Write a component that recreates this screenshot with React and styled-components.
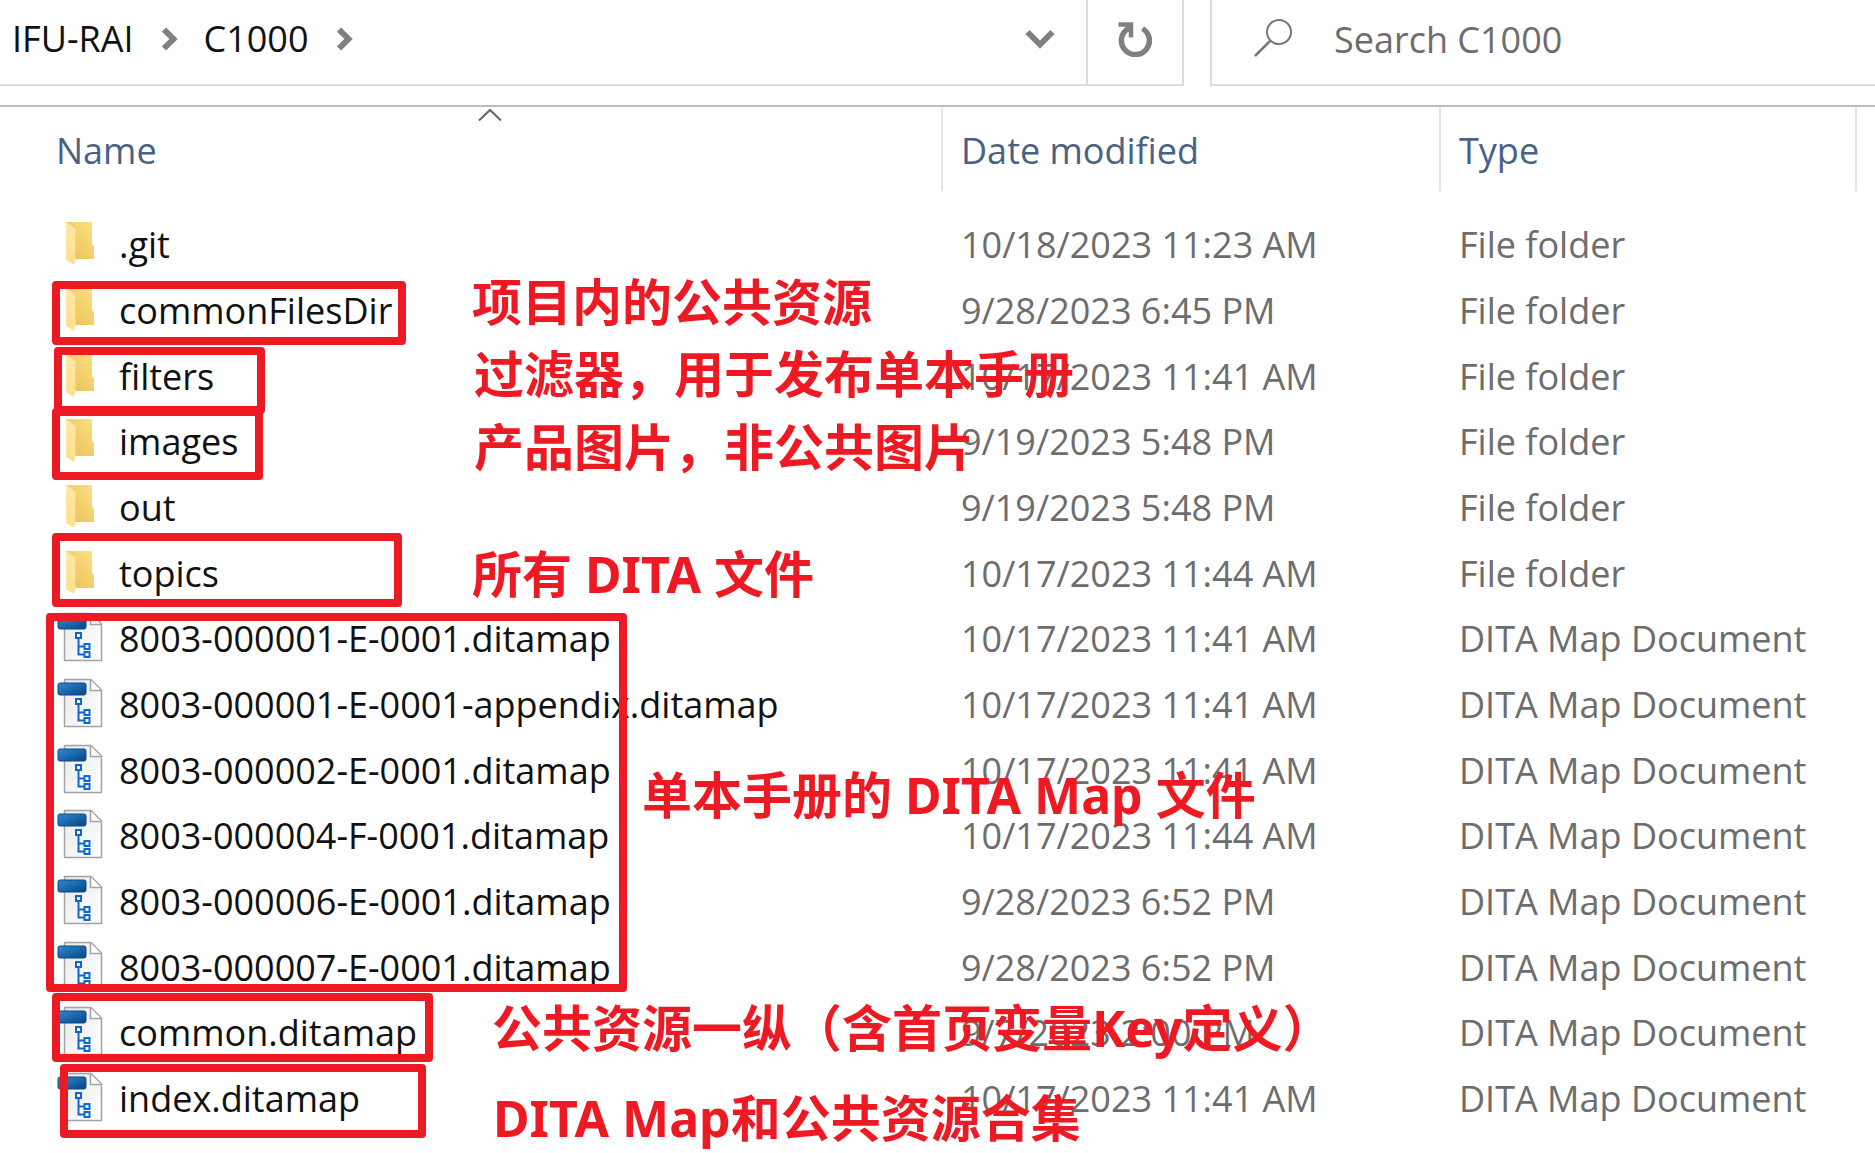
import React from "react";
import styled, { createGlobalStyle } from "styled-components";

const GlobalStyle = createGlobalStyle`
  *, *::before, *::after { box-sizing: border-box; }
  body { margin: 0; background: #fff; }
`;

const uiFont = `"Open Sans", "Noto Sans", sans-serif`;
const noteFont = `"Noto Sans", "Noto Sans CJK SC", sans-serif`;

const Explorer = styled.main`
  position: relative;
  min-height: 100vh;
  overflow: hidden;
  background: #fff;
  color: #111;
  font: 400 36px/48px ${uiFont};
`;

const Toolbar = styled.header`
  display: flex;
  gap: 26px;
  height: 107px;
  padding-bottom: 19px;
  border-bottom: 2px solid #bdbdbd;
`;

const AddressBar = styled.nav`
  flex: 1 1 auto;
  display: flex;
  border: solid #dcdcdc;
  border-width: 0 2px 2px 0;
`;

const Crumbs = styled.ol`
  flex: 1;
  display: flex;
  align-items: center;
  gap: 26px;
  margin: 0;
  padding: 0 0 6px 12px;
  list-style: none;
`;

const Crumb = styled.li`
  display: flex;
  align-items: center;
  gap: 28px;
`;

const CrumbLink = styled.a`
  color: #111;
  text-decoration: none;
`;

const IconButton = styled.button`
  display: flex;
  align-items: center;
  justify-content: center;
  width: ${(p) => p.$width}px;
  padding: 0 0 6px;
  border: 0;
  border-left: ${(p) => (p.$divided ? "2px solid #dcdcdc" : "0")};
  background: none;
`;

const SearchBox = styled.label`
  flex: 0 0 665px;
  display: flex;
  align-items: center;
  gap: 40px;
  padding: 0 0 4px 42px;
  border: solid #dcdcdc;
  border-width: 0 0 2px 2px;
`;

const SearchInput = styled.input`
  flex: 1;
  min-width: 0;
  padding: 0;
  border: 0;
  outline: 0;
  background: none;
  font: inherit;
  &::placeholder { color: #6d6d6d; opacity: 1; }
`;

const FileTable = styled.table`
  width: 100%;
  table-layout: fixed;
  border-collapse: separate;
  border-spacing: 0;
`;

const Column = styled.col`
  width: ${(p) => (p.$width ? `${p.$width}px` : "auto")};
`;

const HeadCell = styled.th`
  position: relative;
  height: 84px;
  padding: 4px 0 0 ${(p) => p.$indent}px;
  border-right: ${(p) => (p.$last ? "0" : "2px solid #e6e6e6")};
  color: #4a6184;
  font-weight: 400;
  text-align: left;
`;

const SortMark = styled.svg`
  position: absolute;
  top: 1px;
  left: calc(50% + 6px);
`;

const HeadGap = styled.tr`
  height: 21px;
`;

const Row = styled.tr`
  height: 66px;
  &:nth-child(3n) { height: 65px; }
`;

const Cell = styled.td`
  padding: 0 0 0 18px;
  color: #6d6d6d;
  white-space: nowrap;
`;

const NameCell = styled(Cell)`
  padding-left: 56px;
  color: #111;
`;

const FileName = styled.span`
  display: flex;
  align-items: center;
  gap: 15px;
`;

const Frame = styled.div`
  position: absolute;
  left: ${(p) => p.$x}px;
  top: ${(p) => p.$y}px;
  width: ${(p) => p.$w}px;
  height: ${(p) => p.$h}px;
  border: 8px solid #ee1a23;
  border-radius: 4px;
  pointer-events: none;
`;

const Note = styled.p`
  position: absolute;
  left: ${(p) => p.$x}px;
  top: ${(p) => p.$y}px;
  margin: 0;
  color: #ee1a23;
  font: 700 50px/60px ${noteFont};
  white-space: nowrap;
  pointer-events: none;
`;

const Chevron = () => (
  <svg width="16" height="24" viewBox="0 0 16 24" aria-hidden="true">
    <path d="M2 2.500L11.500 12L2 21.500" fill="none" stroke="#808080" strokeWidth="6" />
  </svg>
);

const DownChevron = () => (
  <svg width="30" height="20" viewBox="0 0 30 20" aria-hidden="true">
    <path d="M2.500 3L15 15.500L27.500 3" fill="none" stroke="#808080" strokeWidth="6" />
  </svg>
);

const Refresh = () => (
  <svg width="34" height="36" viewBox="0 0 34 36" aria-hidden="true">
    <path d="M24.500 7.500A14 14 0 1 1 9.500 8" fill="none" stroke="#808080" strokeWidth="5.500" />
    <path d="M0.500 3.500H13V16.500" fill="none" stroke="#808080" strokeWidth="4.500" />
    <path d="M6 4H13V14Z" fill="#808080" />
  </svg>
);

const Magnifier = () => (
  <svg width="40" height="42" viewBox="0 0 40 42" aria-hidden="true">
    <circle cx="25" cy="13" r="12" fill="none" stroke="#777" strokeWidth="2" />
    <path d="M16.500 21.500L1 37" stroke="#777" strokeWidth="2.500" />
  </svg>
);

const FolderIcon = () => (
  <svg width="48" height="50" viewBox="0 0 48 50" aria-hidden="true">
    <path d="M10 2H36V24L38 26V39H17L10 5Z" fill="url(#folderBack)" />
    <path d="M10 2L19.500 9V39L18 45L10 40Z" fill="url(#folderFlap)" />
  </svg>
);

const MapIcon = () => (
  <svg width="48" height="56" viewBox="0 -1 48 56" aria-hidden="true">
    <path d="M8.500 1.500H35L45.500 12V48.500H8.500Z" fill="url(#paper)" stroke="#a3a3a3" strokeWidth="1.500" strokeLinejoin="round" />
    <path d="M34.500 2V12.500H45" fill="#fff" stroke="#a3a3a3" strokeWidth="1.500" />
    <rect x="2" y="5" width="28" height="12" rx="2" fill="url(#tab)" stroke="#0a4a86" strokeWidth="1" />
    <g fill="none" stroke="#0b68d0" strokeWidth="2">
      <path d="M22.500 26V42.500H28M22.500 34.500H28" />
      <rect x="20" y="21" width="5" height="5" />
      <rect x="28.500" y="32" width="5" height="5" />
      <rect x="28.500" y="40" width="5" height="5" />
    </g>
  </svg>
);

const Gradients = () => (
  <svg width="0" height="0" style={{ display: "block" }} aria-hidden="true">
    <defs>
      <linearGradient id="folderBack" x1="0" y1="1" x2="1" y2="0">
        <stop offset="0" stopColor="#e6be55" />
        <stop offset="1" stopColor="#ffe083" />
      </linearGradient>
      <linearGradient id="folderFlap" x1="0" y1="0" x2="0" y2="1">
        <stop offset="0" stopColor="#ffe9a9" />
        <stop offset="1" stopColor="#fee08c" />
      </linearGradient>
      <linearGradient id="paper" x1="0" y1="0" x2="1" y2="1">
        <stop offset="0" stopColor="#e9e9e9" />
        <stop offset="1" stopColor="#fff" />
      </linearGradient>
      <linearGradient id="tab" x1="0" y1="0" x2="1" y2="1">
        <stop offset="0" stopColor="#2f8ad6" />
        <stop offset="1" stopColor="#07457f" />
      </linearGradient>
    </defs>
  </svg>
);

const FOLDER = "File folder";
const MAP = "DITA Map Document";

const files = [
  [".git", "10/18/2023 11:23 AM", FOLDER],
  ["commonFilesDir", "9/28/2023 6:45 PM", FOLDER],
  ["filters", "10/17/2023 11:41 AM", FOLDER],
  ["images", "9/19/2023 5:48 PM", FOLDER],
  ["out", "9/19/2023 5:48 PM", FOLDER],
  ["topics", "10/17/2023 11:44 AM", FOLDER],
  ["8003-000001-E-0001.ditamap", "10/17/2023 11:41 AM", MAP],
  ["8003-000001-E-0001-appendix.ditamap", "10/17/2023 11:41 AM", MAP],
  ["8003-000002-E-0001.ditamap", "10/17/2023 11:41 AM", MAP],
  ["8003-000004-F-0001.ditamap", "10/17/2023 11:44 AM", MAP],
  ["8003-000006-E-0001.ditamap", "9/28/2023 6:52 PM", MAP],
  ["8003-000007-E-0001.ditamap", "9/28/2023 6:52 PM", MAP],
  ["common.ditamap", "9/7/2023 2:00 PM", MAP],
  ["index.ditamap", "10/17/2023 11:41 AM", MAP],
];

const frames = [
  [52, 281, 354, 64],
  [54, 347, 211, 67],
  [52, 408, 211, 72],
  [52, 533, 350, 74],
  [46, 613, 581, 379],
  [52, 993, 381, 69],
  [60, 1064, 366, 74],
];

const notes = [
  [472, 272, "项目内的公共资源"],
  [474, 344, "过滤器，用于发布单本手册"],
  [474, 417, "产品图片，非公共图片"],
  [472, 544, "所有 DITA 文件"],
  [642, 765, "单本手册的 DITA Map 文件"],
  [492, 998, "公共资源一纵（含首页变量Key定义）"],
  [493, 1088, "DITA Map和公共资源合集"],
];

export default function App() {
  return (
    <Explorer>
      <GlobalStyle />
      <Gradients />
      <Toolbar>
        <AddressBar aria-label="Address">
          <Crumbs>
            <Crumb><CrumbLink href="#ifu-rai">IFU-RAI</CrumbLink><Chevron /></Crumb>
            <Crumb><CrumbLink href="#c1000">C1000</CrumbLink><Chevron /></Crumb>
          </Crumbs>
          <IconButton type="button" aria-label="Previous locations" $width={92}><DownChevron /></IconButton>
          <IconButton type="button" aria-label="Refresh" $width={96} $divided><Refresh /></IconButton>
        </AddressBar>
        <SearchBox>
          <Magnifier />
          <SearchInput type="search" placeholder="Search C1000" aria-label="Search C1000" />
        </SearchBox>
      </Toolbar>
      <FileTable>
        <colgroup>
          <Column />
          <Column $width={498} />
          <Column $width={416} />
          <Column $width={18} />
        </colgroup>
        <thead>
          <tr>
            <HeadCell scope="col" $indent={56}>
              Name
              <SortMark width="26" height="14" viewBox="0 0 26 14" aria-hidden="true">
                <path d="M2 12.500L13 2L24 12.500" fill="none" stroke="#666" strokeWidth="2" />
              </SortMark>
            </HeadCell>
            <HeadCell scope="col" $indent={18}>Date modified</HeadCell>
            <HeadCell scope="col" $indent={18}>Type</HeadCell>
            <HeadCell as="td" $indent={0} $last />
          </tr>
          <HeadGap />
        </thead>
        <tbody>
          {files.map(([name, date, type]) => (
            <Row key={name}>
              <NameCell>
                <FileName>{type === FOLDER ? <FolderIcon /> : <MapIcon />}{name}</FileName>
              </NameCell>
              <Cell>{date}</Cell>
              <Cell>{type}</Cell>
              <Cell />
            </Row>
          ))}
        </tbody>
      </FileTable>
      {frames.map(([x, y, w, h]) => <Frame key={y} $x={x} $y={y} $w={w} $h={h} />)}
      {notes.map(([x, y, text]) => <Note key={text} $x={x} $y={y}>{text}</Note>)}
    </Explorer>
  );
}
